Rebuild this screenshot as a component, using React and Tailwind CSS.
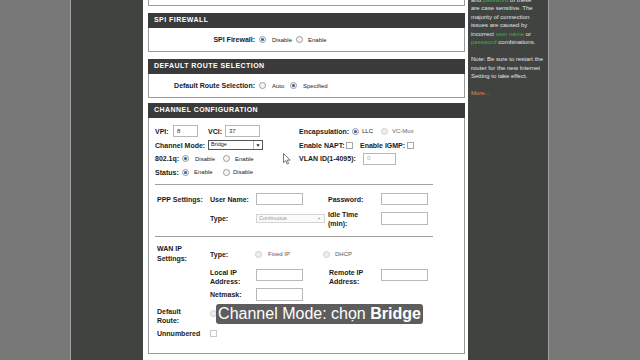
const Lbl = ({ className = "", children }) => (
  <span className={`shrink-0 font-bold text-[7px] leading-[9px] text-[#1a1a1a] ${className}`}>{children}</span>
);

const Txt = ({ className = "", children }) => (
  <span className={`shrink-0 text-[6px] leading-none text-[#222] ${className}`}>{children}</span>
);

const Radio = ({ on, dim, className = "" }) => (
  <span
    className={`inline-flex w-[7px] h-[7px] shrink-0 items-center justify-center rounded-full border ${
      dim ? "border-[#d0d0d0] bg-[#eeeeee]" : "border-[#9a9a9a] bg-[#f6f6f6]"
    } ${className}`}
  >
    {on && <span className="w-[3px] h-[3px] rounded-full bg-[#2d5ea8]" />}
  </span>
);

const Check = ({ className = "" }) => (
  <span className={`inline-block w-[7px] h-[7px] shrink-0 border border-[#a8a8a8] bg-white ${className}`} />
);

const Input = ({ className = "", children }) => (
  <span
    className={`flex items-center shrink-0 border border-[#b8b8b8] bg-white pl-[3px] text-[6px] text-[#333] ${className}`}
  >
    {children}
  </span>
);

const Section = ({ title, className = "", bodyClass = "", children }) => (
  <div className={`shrink-0 ${className}`}>
    <div className="h-[15px] bg-[#3a3a3a] flex items-center px-[6px] text-white font-bold text-[7px] tracking-[0.45px]">
      {title}
    </div>
    <div className={`border-x border-b border-[#9a9a9a] bg-white ${bodyClass}`}>{children}</div>
  </div>
);

const Green = ({ children }) => <span className="text-[#3fae3f]">{children}</span>;

export default function App() {
  return (
    <div className="relative flex w-[640px] h-[360px] overflow-hidden font-['Liberation_Sans',Arial,sans-serif]">
      <div className="w-[70px] bg-[#787878]" />
      <div className="w-[1px] bg-[#a2a2a2]" />
      <div className="w-[72px] bg-[#414341]" />

      {/* main content */}
      <div className="w-[325px] bg-white pl-[5px] pr-[3px] flex flex-col">
        <div className="h-[6px] shrink-0 border-x border-b border-[#9a9a9a]" />

        <Section title="SPI FIREWALL" className="mt-[7px]" bodyClass="h-[24px] flex items-center">
          <Lbl className="w-[106px] text-right">SPI Firewall:</Lbl>
          <Radio on className="ml-[4px]" />
          <Txt className="ml-[6px] w-[24px]">Disable</Txt>
          <Radio />
          <Txt className="ml-[5px]">Enable</Txt>
        </Section>

        <Section title="DEFAULT ROUTE SELECTION" className="mt-[7px]" bodyClass="h-[24px] flex items-center">
          <Lbl className="w-[106px] text-right">Default Route Selection:</Lbl>
          <Radio className="ml-[4px]" />
          <Txt className="ml-[6px] w-[18px]">Auto</Txt>
          <Radio on />
          <Txt className="ml-[6px]">Specified</Txt>
        </Section>

        <Section title="CHANNEL CONFIGURATION" className="mt-[5px]" bodyClass="h-[236px] pt-[6px] pl-[6px] flex flex-col">
          {/* row 1 */}
          <div className="flex items-center h-[14px]">
            <div className="w-[144px] flex items-center">
              <Lbl className="w-[18px]">VPI:</Lbl>
              <Input className="w-[25px] h-[12px]">8</Input>
              <Lbl className="ml-[10px] w-[17px]">VCI:</Lbl>
              <Input className="w-[35px] h-[12px]">37</Input>
            </div>
            <Lbl className="w-[53px]">Encapsulation:</Lbl>
            <Radio on />
            <Txt className="ml-[3px] w-[19px]">LLC</Txt>
            <Radio dim />
            <Txt className="ml-[4px] text-[#666]">VC-Mux</Txt>
          </div>
          {/* row 2 */}
          <div className="flex items-center h-[14px]">
            <div className="w-[144px] flex items-center">
              <Lbl className="w-[53px]">Channel Mode:</Lbl>
              <span className="flex items-center w-[55px] h-[10px] border border-[#555] bg-white">
                <span className="flex-1 pl-[2px] text-[5.5px] leading-none text-[#222]">Bridge</span>
                <span className="w-[9px] h-full border-l border-[#bbb] flex items-center justify-center text-[5px] leading-none text-[#222]">
                  ▼
                </span>
              </span>
            </div>
            <Lbl className="w-[47px]">Enable NAPT:</Lbl>
            <Check />
            <Lbl className="ml-[7px] w-[47px]">Enable IGMP:</Lbl>
            <Check />
          </div>
          {/* row 3 */}
          <div className="flex items-center h-[13px]">
            <div className="w-[144px] flex items-center">
              <Lbl className="w-[27px]">802.1q:</Lbl>
              <Radio on />
              <Txt className="ml-[6px] w-[28px]">Disable</Txt>
              <Radio />
              <Txt className="ml-[5px]">Enable</Txt>
            </div>
            <Lbl className="w-[64px]">VLAN ID(1-4095):</Lbl>
            <Input className="w-[33px] h-[12px] text-[#aaa]">0</Input>
          </div>
          {/* row 4 */}
          <div className="flex items-center h-[14px]">
            <Lbl className="w-[27px]">Status:</Lbl>
            <Radio on />
            <Txt className="ml-[5px] w-[29px]">Enable</Txt>
            <Radio />
            <Txt className="ml-[3px]">Disable</Txt>
          </div>

          <div className="mt-[5px] w-[278px] border-t border-[#a0a0a0]" />

          {/* PPP */}
          <div className="ml-[2px] mt-[8px] flex items-center h-[12px]">
            <Lbl className="w-[53px]">PPP Settings:</Lbl>
            <Lbl className="w-[46px]">User Name:</Lbl>
            <Input className="w-[47px] h-[12px]" />
            <Lbl className="ml-[25px] w-[53px]">Password:</Lbl>
            <Input className="w-[47px] h-[12px]" />
          </div>
          <div className="ml-[2px] mt-[7px] flex items-center h-[13px]">
            <span className="w-[53px] shrink-0" />
            <Lbl className="w-[46px]">Type:</Lbl>
            <span className="flex items-center w-[69px] h-[9px] border border-[#d4d4d4] bg-[#fafafa]">
              <span className="flex-1 pl-[2px] text-[5.5px] leading-none text-[#999]">Continuous</span>
              <span className="w-[7px] text-[4px] leading-none text-[#aaa]">▼</span>
            </span>
            <Lbl className="ml-[3px] w-[53px]">
              Idle Time
              <br />
              (min):
            </Lbl>
            <Input className="w-[47px] h-[13px]" />
          </div>

          <div className="mt-[11px] w-[278px] border-t border-[#a0a0a0]" />

          {/* WAN */}
          <div className="ml-[2px] mt-[7px] flex items-center h-[20px]">
            <Lbl className="w-[53px] leading-[10px]">
              WAN IP
              <br />
              Settings:
            </Lbl>
            <Lbl className="w-[45px]">Type:</Lbl>
            <Radio dim />
            <Txt className="ml-[6px] w-[55px] text-[#555]">Fixed IP</Txt>
            <Radio dim />
            <Txt className="ml-[5px] text-[#555]">DHCP</Txt>
          </div>
          <div className="ml-[2px] mt-[3px] flex items-center h-[19px]">
            <span className="w-[53px] shrink-0" />
            <Lbl className="w-[46px] leading-[9.5px]">
              Local IP
              <br />
              Address:
            </Lbl>
            <Input className="w-[47px] h-[12px] -mt-[3px]" />
            <Lbl className="ml-[26px] w-[52px] leading-[9.5px]">
              Remote IP
              <br />
              Address:
            </Lbl>
            <Input className="w-[47px] h-[12px] -mt-[3px]" />
          </div>
          <div className="ml-[2px] mt-[1px] flex items-center h-[15px]">
            <span className="w-[53px] shrink-0" />
            <Lbl className="w-[46px]">Netmask:</Lbl>
            <Input className="w-[47px] h-[13px]" />
          </div>
          <div className="ml-[2px] mt-[4px] flex items-center h-[19px]">
            <Lbl className="w-[53px] leading-[9.5px]">
              Default
              <br />
              Route:
            </Lbl>
            <Radio dim className="-mt-[4px]" />
            <Radio dim className="ml-[28px] -mt-[4px]" />
          </div>
          <div className="ml-[2px] mt-[1px] flex items-center h-[14px]">
            <Lbl className="w-[53px]">Unnumbered</Lbl>
            <Check className="border-[#c8c8c8]" />
          </div>
        </Section>
      </div>

      {/* help panel */}
      <div className="w-[80px] bg-[#414341] pl-[3px] pr-[1px]">
        <p className="-mt-[4px] text-[6px] leading-[8.45px] text-[#e2e2e2] whitespace-nowrap">
          and <Green>password</Green> of these
          <br />
          are case sensitive. The
          <br />
          majority of connection
          <br />
          issues are caused by
          <br />
          incorrect <Green>user name</Green> or
          <br />
          <Green>password</Green> combinations.
          <br />
          <br />
          Note: Be sure to restart the
          <br />
          router for the new Internet
          <br />
          Setting to take effect.
          <br />
          <br />
          <span className="text-[#d89050]">More...</span>
        </p>
      </div>
      <div className="w-[1px] bg-[#a2a2a2]" />
      <div className="flex-1 bg-[#787878]" />

      {/* mouse cursor */}
      <svg className="absolute left-[283px] top-[153px]" width="8" height="12" viewBox="0 0 8 12">
        <path d="M0.5 0.5 L0.5 9.5 L2.7 7.6 L4.2 11 L5.6 10.4 L4.2 7.1 L7.2 7.1 Z" fill="#fff" stroke="#555" strokeWidth="0.8" />
      </svg>

      {/* caption */}
      <div className="absolute left-[216px] top-[304px] w-[207px] h-[20px] rounded-[3px] bg-[#4b4b4b]/90 flex items-center justify-center text-white text-[16px] leading-none">
        Channel Mode: chọn&nbsp;<span className="font-bold">Bridge</span>
      </div>
    </div>
  );
}
